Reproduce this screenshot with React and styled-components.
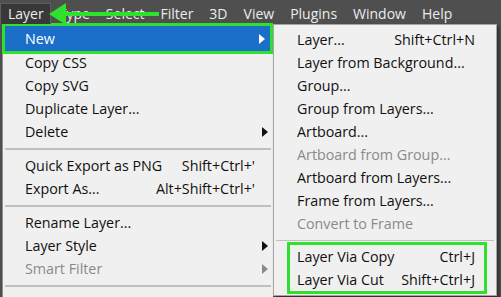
import React from "react";
import styled, { createGlobalStyle } from "styled-components";

const GREEN = "#2fe02f";

const GlobalStyle = createGlobalStyle`
  html, body {
    margin: 0;
    padding: 0;
    background: #4f4f4f;
  }
  body {
    font-family: "Open Sans", "Noto Sans", sans-serif;
  }
`;

const mainItems = [
  { label: "New", sub: true, active: true },
  { label: "Copy CSS" },
  { label: "Copy SVG" },
  { label: "Duplicate Layer..." },
  { label: "Delete", sub: true },
  { sep: true },
  { label: "Quick Export as PNG", keys: "Shift+Ctrl+'" },
  { label: "Export As...", keys: "Alt+Shift+Ctrl+'" },
  { sep: true },
  { label: "Rename Layer..." },
  { label: "Layer Style", sub: true },
  { label: "Smart Filter", sub: true, off: true },
  { sep: true },
  // only the submenu arrow of the next entry peeks in at the bottom
  { label: "", sub: true },
];

const newItems = [
  { label: "Layer...", keys: "Shift+Ctrl+N" },
  { label: "Layer from Background..." },
  { label: "Group..." },
  { label: "Group from Layers..." },
  { label: "Artboard..." },
  { label: "Artboard from Group...", off: true },
  { label: "Artboard from Layers..." },
  { label: "Frame from Layers..." },
  { label: "Convert to Frame", off: true },
];

const viaItems = [
  { label: "Layer Via Copy", keys: "Ctrl+J" },
  { label: "Layer Via Cut", keys: "Shift+Ctrl+J" },
];

const barItems = ["Type", "Select", "Filter", "3D", "View", "Plugins", "Window", "Help"];

function App() {
  return (
    <Screen>
      <GlobalStyle />
      <MenuBar>
        <BarItem open>Layer</BarItem>
        {barItems.map((b) => (
          <BarItem key={b}>{b}</BarItem>
        ))}
        <Pointer width="112" height="24" viewBox="0 0 112 24">
          <polygon points="0,12 17,1 17,23" fill={GREEN} />
          <rect x="15" y="10" width="95" height="4" fill={GREEN} />
        </Pointer>
      </MenuBar>

      <Dropdowns>
        <MainMenu>
          {mainItems.map((it, i) =>
            it.sep ? (
              <Separator key={i} top={5} bottom={4} />
            ) : (
              <Row key={i} active={it.active} off={it.off}>
                <Label>{it.label}</Label>
                <Keys>{it.keys}</Keys>
                <Arrow>{it.sub && <Caret active={it.active} off={it.off} />}</Arrow>
              </Row>
            )
          )}
        </MainMenu>

        <SubMenu>
          {newItems.map((it) => (
            <SubRow key={it.label} off={it.off}>
              <Label>{it.label}</Label>
              <Keys>{it.keys}</Keys>
            </SubRow>
          ))}
          <Separator top={5} bottom={1} thin />
          <Marked>
            {viaItems.map((it) => (
              <SubRow key={it.label} inset>
                <Label>{it.label}</Label>
                <Keys>{it.keys}</Keys>
              </SubRow>
            ))}
          </Marked>
        </SubMenu>
      </Dropdowns>
    </Screen>
  );
}

export default App;

const Screen = styled.div`
  width: 501px;
  height: 297px;
  overflow: hidden;
  background: #4f4f4f;
  font-size: 14.3px;
`;

const MenuBar = styled.div`
  position: relative;
  height: 24px;
  display: flex;
  align-items: flex-end;
  font-size: 14px;
  color: #ececec;
`;

const BarItem = styled.div`
  height: 21px;
  line-height: 20px;
  padding: 0 ${(p) => (p.open ? "6px 0 7px" : "7px")};
  box-sizing: border-box;
  background: ${(p) => (p.open ? "#383838" : "transparent")};
  border: 1px solid ${(p) => (p.open ? "#5e5e5e" : "transparent")};
  border-bottom: none;
`;

const Pointer = styled.svg`
  position: absolute;
  left: 49px;
  top: 2px;
`;

const Dropdowns = styled.div`
  display: flex;
  align-items: flex-start;
  padding-left: 2px;
`;

const MainMenu = styled.div`
  width: 270px;
  height: 300px;
  padding-top: 2px;
  background: #f0f0f0;
  border-left: 1px solid #8c8c8c;
  color: #111;
`;

const Row = styled.div`
  display: grid;
  grid-template-columns: 1fr auto 18px;
  align-items: center;
  height: ${(p) => (p.active ? "25px" : "23px")};
  margin: 0 ${(p) => (p.active ? "3px" : "0")} 0 ${(p) => (p.active ? "2px" : "0")};
  padding-left: ${(p) => (p.active ? "20px" : "22px")};
  background: ${(p) => (p.active ? "#1b6fc8" : "transparent")};
  color: ${(p) => (p.active ? "#fff" : p.off ? "#8a8a8a" : "#111")};
  outline: ${(p) => (p.active ? `3px solid ${GREEN}` : "none")};
`;

const Label = styled.span`
  white-space: nowrap;
`;

const Keys = styled.span`
  white-space: nowrap;
  text-align: right;
`;

const Arrow = styled.span`
  display: flex;
  justify-content: center;
  align-items: center;
`;

const Caret = styled.span`
  width: 0;
  height: 0;
  border-top: 5px solid transparent;
  border-bottom: 5px solid transparent;
  border-left: 6px solid
    ${(p) => (p.active ? "#fff" : p.off ? "#8a8a8a" : "#111")};
  margin-left: 2px;
`;

const Separator = styled.div`
  margin: ${(p) => p.top}px 2px ${(p) => p.bottom}px;
  height: ${(p) => (p.thin ? "1px" : "2px")};
  background: #bfbfbf;
`;

const SubMenu = styled.div`
  width: 222px;
  padding: 3px 0 1px;
  background: #f0f0f0;
  border: 1px solid #a5a5a5;
  box-shadow: 2px 2px 3px rgba(0, 0, 0, 0.45);
  color: #111;
`;

const SubRow = styled.div`
  display: flex;
  justify-content: space-between;
  align-items: center;
  height: 23px;
  padding: 0 ${(p) => (p.inset ? "9px 0 7px" : "21px 0 23px")};
  color: ${(p) => (p.off ? "#8a8a8a" : "#111")};
`;

const Marked = styled.div`
  margin: 0 9px 0 13px;
  border: 3px solid ${GREEN};
`;
